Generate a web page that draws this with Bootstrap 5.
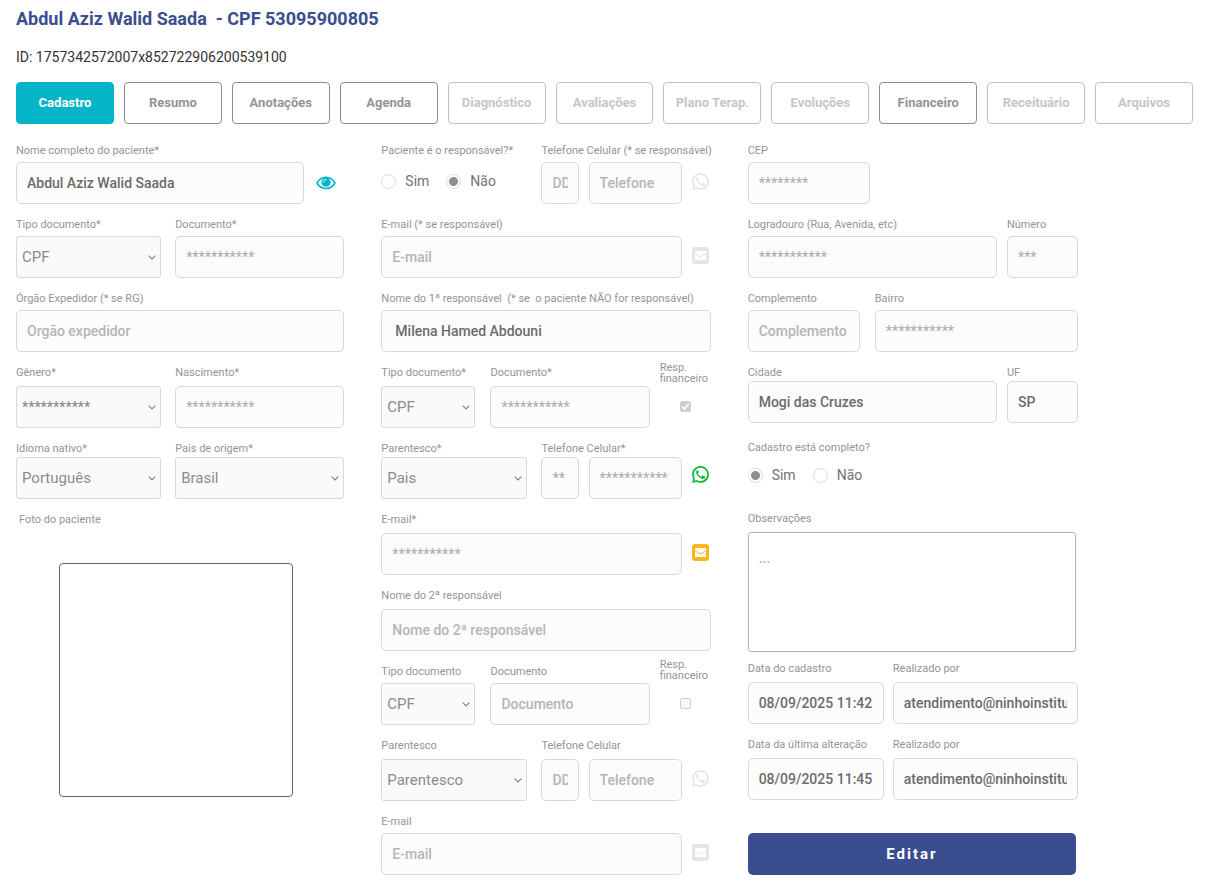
<!DOCTYPE html>
<html lang="pt-BR">
<head>
<meta charset="utf-8">
<meta name="viewport" content="width=device-width, initial-scale=1">
<title>Cadastro do paciente</title>
<link href="https://cdn.jsdelivr.net/npm/bootstrap@5.3.0/dist/css/bootstrap.min.css" rel="stylesheet">
<style>
  body { font-family: Roboto, "Liberation Sans", sans-serif; color: #333; background: #fff; }
  .page-wrap { padding: 8px 35px 10px 16px; }
  .patient-title { font-size: 18px; line-height: 22px; font-weight: 700; color: #3a4d8f; margin: 0 0 16px; }
  .patient-id { font-size: 14px; line-height: 22px; font-weight: 400; color: #333; margin: 0 0 14px; }

  .tab-strip { display: grid; grid-template-columns: repeat(11, minmax(0, 1fr)); gap: 10px; margin-bottom: 21px; }
  .tab-strip .btn { height: 42px; padding: 0 2px; font-size: 13px; font-weight: 700; border-radius: 4px; color: #949494; border: 1px solid #8c8c8c; background: #fff; white-space: nowrap; }
  .tab-strip .btn.active { background: #04b4c8; border-color: #04b4c8; color: #fff; }
  .tab-strip .btn:disabled { color: #c6c6c6; border-color: #c0c0c0; opacity: 1; }

  .form-cols { display: grid; grid-template-columns: 328fr 329fr 330fr; column-gap: 37px; align-items: start; margin-right: 115px; }
  .stack { display: flex; flex-direction: column; gap: 15px; min-width: 0; }
  .line { display: grid; align-items: end; }
  .name-line { grid-template-columns: minmax(0, 1fr) 20px; gap: 12px; padding-right: 8px; }
  .pair { grid-template-columns: minmax(0, 145fr) minmax(0, 169fr); gap: 14px; }
  .mail-line { grid-template-columns: minmax(0, 1fr) 19px; gap: 10px; }
  .contact-line { grid-template-columns: minmax(0, 146fr) minmax(0, 169fr); gap: 14px; }
  .phone-set { display: grid; grid-template-columns: minmax(0, 37fr) minmax(0, 93fr) 19px; gap: 10px; }
  .doc-line { grid-template-columns: minmax(0, 99fr) minmax(0, 159fr) 51px; gap: 10px; }
  .doc-line > :first-child { padding-right: 5px; }
  .zip { grid-template-columns: minmax(0, 122fr) minmax(0, 208fr); }
  .street { grid-template-columns: minmax(0, 249fr) minmax(0, 71fr); gap: 10px; }
  .district { grid-template-columns: minmax(0, 112fr) minmax(0, 203fr); gap: 15px; }
  .stamp { grid-template-columns: minmax(0, 136fr) minmax(0, 185fr); gap: 9px; }

  .cap { display: block; font-size: 11px; line-height: 12px; color: #949494; margin: 0 0 5px; white-space: nowrap; }
  .roomy .cap { margin-bottom: 7px; }
  .tight .cap { margin-bottom: 2px; }

  .form-control, .form-select { height: 42px; font-size: 14px; line-height: 22px; font-weight: 500; border: 1px solid #d9d9d9; border-radius: 5px; }
  .form-control { padding: 0 10px; }
  .form-control, .form-control:disabled { background-color: #fcfcfc; color: #6b6b6b; }
  .form-control::placeholder { color: #b5b5b5; opacity: 1; }
  .form-control.masked { color: #b0b0b8; }
  .form-select, .form-select:disabled { padding: 0 20px 0 5px; font-size: 15px; font-weight: 400; border-radius: 3px; color: #8c8c8c; background-color: #fafafa; background-size: 8px 5px; background-position: right 4px center;
    background-image: url("data:image/svg+xml,%3Csvg xmlns='http://www.w3.org/2000/svg' viewBox='0 0 8 5'%3E%3Cpath d='M.7.7 4 4 7.3.7' fill='none' stroke='%23858585' stroke-width='1.2'/%3E%3C/svg%3E"); }
  .form-select.masked:disabled { font-size: 14px; font-weight: 500; }
  .indent { padding-left: 13px; }
  textarea.form-control { display: block; height: 120px; padding: 14px 10px; resize: none; border-color: #b3b3b3; border-radius: 3px; background: #fff; }

  .choices { display: flex; align-items: center; height: 38px; gap: 17px; }
  .choices label { display: flex; align-items: center; gap: 9px; font-size: 14px; line-height: 18px; color: #737373; }
  .choices input { appearance: none; width: 15px; height: 15px; margin: 0; border: 1px solid #dcdcdc; border-radius: 50%; background: #fff; }
  .choices input:checked { background: radial-gradient(circle, #8e8e8e 4px, #fff 5px); }

  .resp { margin-top: -8px; }
  .resp .cap { line-height: 11px; margin-bottom: 2px; }
  .check-cell { height: 42px; padding-bottom: 2px; display: flex; align-items: center; justify-content: center; }
  .check-cell input { appearance: none; width: 11px; height: 11px; margin: 0; border: 1px solid #cfcfcf; border-radius: 2px; background: #f8f8f8; }
  .check-cell input:checked { border-color: #cfcfcf; background: #cfcfcf url("data:image/svg+xml,%3Csvg xmlns='http://www.w3.org/2000/svg' viewBox='0 0 9 9'%3E%3Cpath d='M1.2 4.8 3.4 7 7.8 1.8' fill='none' stroke='white' stroke-width='1.6'/%3E%3C/svg%3E") center / 9px 9px no-repeat; }

  .icon-btn { height: 42px; padding: 0 0 4px; border: 0; background: none; display: flex; align-items: center; justify-content: flex-start; color: #e5e5e5; }
  .icon-btn.eye { color: #04b4c8; padding: 0; }
  .icon-btn.wa-on { color: #00bb2d; padding-bottom: 8px; }
  .icon-btn.mail-on { color: #ffb61a; }

  .photo-cap { margin: 0 0 37px 3px; }
  .photo-box { display: block; width: 234px; max-width: 80%; aspect-ratio: 1; margin-left: 43px; border: 1px solid #666; border-radius: 4px; background: #fff; }
  .short { margin-right: 2px; }
  .notes { margin-bottom: -4px; }
  .btn-edit { height: 42px; margin-top: 18px; padding: 0; border: 0; border-radius: 5px; background: #3a4d8f; color: #fff; font-size: 15px; font-weight: 700; letter-spacing: 2px; }
  .btn-edit:hover { background: #31427c; color: #fff; }
</style>
</head>
<body>
<svg class="d-none" aria-hidden="true">
  <symbol id="i-wa" viewBox="0 0 16 16"><path fill="currentColor" d="M13.601 2.326A7.854 7.854 0 0 0 7.994 0C3.627 0 .068 3.558.064 7.926c0 1.399.366 2.76 1.057 3.965L0 16l4.204-1.102a7.933 7.933 0 0 0 3.79.965h.004c4.368 0 7.926-3.558 7.93-7.93A7.898 7.898 0 0 0 13.6 2.326zM7.994 14.221a6.3 6.3 0 0 1-3.2-.9l-.24-.144-2.494.654.666-2.433-.156-.251a6.3 6.3 0 0 1-.9-3.3c0-3.5 2.8-6.3 6.3-6.3a6.3 6.3 0 0 1 6.300 6.300c0 3.500-2.800 6.370-6.276 6.374z"/><path fill="currentColor" d="M5.200 3.900c-.5 0-1.300.7-1.300 1.800 0 1.500 1 2.900 2.300 4.200 1.400 1.400 2.900 2.200 4.300 2.200 1.100 0 1.900-.9 1.900-1.800 0-.3-.1-.4-.3-.5l-1.900-.9c-.3-.1-.4 0-.6.2l-.6.8c-.2.2-.3.2-.6.1C7.200 9.500 6 8.300 5.600 7.300c-.1-.2 0-.4.1-.5l.5-.6c.1-.2.2-.3.1-.5l-.7-1.600c-.1-.2-.2-.2-.4-.2z"/></symbol>
  <symbol id="i-mail" viewBox="0 0 17 17"><rect width="17" height="17" rx="3" fill="currentColor"/><path fill="#fff" d="M3 4h11v2.200L8.500 9.500 3 6.200zM3 7.200l5.500 3.300L14 7.200V13H3z"/></symbol>
  <symbol id="i-eye" viewBox="0 0 20 14"><path fill="none" stroke="currentColor" stroke-width="1.600" d="M1 7C3 3.500 6.200 1.300 10 1.300S17 3.500 19 7c-2 3.500-5.200 5.500-9 5.500S3 10.500 1 7z"/><circle cx="10" cy="6.200" r="4.600" fill="currentColor"/><path fill="none" stroke="#fff" stroke-width="1" stroke-linecap="round" d="M7.500 6c0-1.400.9-2.400 2.300-2.500"/></symbol>
</svg>

<main class="page-wrap">
  <h1 class="patient-title">Abdul Aziz Walid Saada &nbsp;- CPF 53095900805</h1>
  <p class="patient-id">ID: 1757342572007x852722906200539100</p>

  <nav class="tab-strip" aria-label="Seções">
    <button type="button" class="btn active">Cadastro</button>
    <button type="button" class="btn">Resumo</button>
    <button type="button" class="btn">Anotações</button>
    <button type="button" class="btn">Agenda</button>
    <button type="button" class="btn" disabled>Diagnóstico</button>
    <button type="button" class="btn" disabled>Avaliações</button>
    <button type="button" class="btn" disabled>Plano Terap.</button>
    <button type="button" class="btn" disabled>Evoluções</button>
    <button type="button" class="btn">Financeiro</button>
    <button type="button" class="btn" disabled>Receituário</button>
    <button type="button" class="btn" disabled>Arquivos</button>
  </nav>

  <form class="form-cols">
    <!-- Paciente -->
    <section class="stack">
      <div class="line name-line">
        <div><label class="cap" for="nome">Nome completo do paciente*</label><input id="nome" class="form-control" value="Abdul Aziz Walid Saada" disabled></div>
        <button type="button" class="icon-btn eye" aria-label="Ver dados"><svg width="20" height="14"><use href="#i-eye"/></svg></button>
      </div>
      <div class="line pair">
        <div><label class="cap" for="tdoc">Tipo documento*</label><select id="tdoc" class="form-select" disabled><option>CPF</option></select></div>
        <div><label class="cap" for="doc">Documento*</label><input id="doc" class="form-control masked" value="***********" disabled></div>
      </div>
      <div><label class="cap" for="orgao">Órgão Expedidor (* se RG)</label><input id="orgao" class="form-control" placeholder="Orgão expedidor" disabled></div>
      <div class="line pair roomy">
        <div><label class="cap" for="genero">Gênero*</label><select id="genero" class="form-select masked" disabled><option>***********</option></select></div>
        <div><label class="cap" for="nasc">Nascimento*</label><input id="nasc" class="form-control masked" value="***********" disabled></div>
      </div>
      <div class="line pair tight">
        <div><label class="cap" for="idioma">Idioma nativo*</label><select id="idioma" class="form-select" disabled><option>Português</option></select></div>
        <div><label class="cap" for="pais">País de origem*</label><select id="pais" class="form-select" disabled><option>Brasil</option></select></div>
      </div>
      <div>
        <label class="cap photo-cap" for="foto">Foto do paciente</label>
        <button type="button" id="foto" class="photo-box"></button>
      </div>
    </section>

    <!-- Responsáveis -->
    <section class="stack">
      <div class="line contact-line align-items-start">
        <div>
          <span class="cap" id="eresp">Paciente é o responsável?*</span>
          <div class="choices" role="radiogroup" aria-labelledby="eresp">
            <label><input type="radio" name="resp">Sim</label>
            <label><input type="radio" name="resp" checked>Não</label>
          </div>
        </div>
        <div>
          <label class="cap" for="tel0">Telefone Celular (* se responsável)</label>
          <div class="phone-set"><input class="form-control" aria-label="DDD" placeholder="DDD" disabled><input id="tel0" class="form-control" placeholder="Telefone" disabled><button type="button" class="icon-btn" aria-label="WhatsApp" disabled><svg width="17" height="17"><use href="#i-wa"/></svg></button></div>
        </div>
      </div>
      <div class="line mail-line">
        <div><label class="cap" for="mail0">E-mail (* se responsável)</label><input id="mail0" class="form-control" placeholder="E-mail" disabled></div>
        <button type="button" class="icon-btn" aria-label="Enviar e-mail" disabled><svg width="17" height="17"><use href="#i-mail"/></svg></button>
      </div>
      <div><label class="cap" for="nome1">Nome do 1ª responsável &nbsp;(* se &nbsp;o paciente NÃO for responsável)</label><input id="nome1" class="form-control indent" value="Milena Hamed Abdouni" disabled></div>
      <div class="line doc-line roomy">
        <div><label class="cap" for="tdoc1">Tipo documento*</label><select id="tdoc1" class="form-select" disabled><option>CPF</option></select></div>
        <div><label class="cap" for="doc1">Documento*</label><input id="doc1" class="form-control masked" value="***********" disabled></div>
        <div class="resp"><label class="cap" for="fin1">Resp.<br>financeiro</label><div class="check-cell"><input type="checkbox" id="fin1" checked disabled></div></div>
      </div>
      <div class="line contact-line tight">
        <div><label class="cap" for="par1">Parentesco*</label><select id="par1" class="form-select" disabled><option>Pais</option></select></div>
        <div>
          <label class="cap" for="tel1">Telefone Celular*</label>
          <div class="phone-set"><input class="form-control masked" aria-label="DDD" value="**" disabled><input id="tel1" class="form-control masked" value="***********" disabled><button type="button" class="icon-btn wa-on" aria-label="WhatsApp"><svg width="17" height="17"><use href="#i-wa"/></svg></button></div>
        </div>
      </div>
      <div class="line mail-line roomy">
        <div><label class="cap" for="mail1">E-mail*</label><input id="mail1" class="form-control masked" value="***********" disabled></div>
        <button type="button" class="icon-btn mail-on" aria-label="Enviar e-mail"><svg width="17" height="17"><use href="#i-mail"/></svg></button>
      </div>
      <div class="roomy"><label class="cap" for="nome2">Nome do 2ª responsável</label><input id="nome2" class="form-control" placeholder="Nome do 2ª responsável" disabled></div>
      <div class="line doc-line">
        <div><label class="cap" for="tdoc2">Tipo documento</label><select id="tdoc2" class="form-select" disabled><option>CPF</option></select></div>
        <div><label class="cap" for="doc2">Documento</label><input id="doc2" class="form-control" placeholder="Documento" disabled></div>
        <div class="resp"><label class="cap" for="fin2">Resp.<br>financeiro</label><div class="check-cell"><input type="checkbox" id="fin2" disabled></div></div>
      </div>
      <div class="line contact-line roomy">
        <div><label class="cap" for="par2">Parentesco</label><select id="par2" class="form-select" disabled><option>Parentesco</option></select></div>
        <div>
          <label class="cap" for="tel2">Telefone Celular</label>
          <div class="phone-set"><input class="form-control" aria-label="DDD" placeholder="DDD" disabled><input id="tel2" class="form-control" placeholder="Telefone" disabled><button type="button" class="icon-btn" aria-label="WhatsApp" disabled><svg width="17" height="17"><use href="#i-wa"/></svg></button></div>
        </div>
      </div>
      <div class="line mail-line">
        <div><label class="cap" for="mail2">E-mail</label><input id="mail2" class="form-control" placeholder="E-mail" disabled></div>
        <button type="button" class="icon-btn" aria-label="Enviar e-mail" disabled><svg width="17" height="17"><use href="#i-mail"/></svg></button>
      </div>
    </section>

    <!-- Endereço e registro -->
    <section class="stack">
      <div class="line zip">
        <div><label class="cap" for="cep">CEP</label><input id="cep" class="form-control masked" value="********" disabled></div>
      </div>
      <div class="line street">
        <div><label class="cap" for="rua">Logradouro (Rua, Avenida, etc)</label><input id="rua" class="form-control masked" value="***********" disabled></div>
        <div><label class="cap" for="num">Número</label><input id="num" class="form-control masked" value="***" disabled></div>
      </div>
      <div class="line district">
        <div><label class="cap" for="comp">Complemento</label><input id="comp" class="form-control" placeholder="Complemento" disabled></div>
        <div><label class="cap" for="bairro">Bairro</label><input id="bairro" class="form-control masked" value="***********" disabled></div>
      </div>
      <div class="line street tight">
        <div><label class="cap" for="cidade">Cidade</label><input id="cidade" class="form-control" value="Mogi das Cruzes" disabled></div>
        <div><label class="cap" for="uf">UF</label><input id="uf" class="form-control" value="SP" disabled></div>
      </div>
      <div class="tight pt-1">
        <span class="cap" id="compl">Cadastro está completo?</span>
        <div class="choices" role="radiogroup" aria-labelledby="compl">
          <label><input type="radio" name="completo" checked>Sim</label>
          <label><input type="radio" name="completo">Não</label>
        </div>
      </div>
      <div class="short notes roomy pt-1"><label class="cap" for="obs">Observações</label><textarea id="obs" class="form-control" placeholder="..."></textarea></div>
      <div class="line stamp roomy">
        <div><label class="cap" for="dcad">Data do cadastro</label><input id="dcad" class="form-control" value="08/09/2025 11:42" disabled></div>
        <div><label class="cap" for="pcad">Realizado por</label><input id="pcad" class="form-control" value="atendimento@ninhoinstituto.com.br" disabled></div>
      </div>
      <div class="line stamp roomy">
        <div><label class="cap" for="dalt">Data da última alteração</label><input id="dalt" class="form-control" value="08/09/2025 11:45" disabled></div>
        <div><label class="cap" for="palt">Realizado por</label><input id="palt" class="form-control" value="atendimento@ninhoinstituto.com.br" disabled></div>
      </div>
      <button type="button" class="btn btn-edit short">Editar</button>
    </section>
  </form>
</main>
<script src="https://cdn.jsdelivr.net/npm/bootstrap@5.3.0/dist/js/bootstrap.bundle.min.js"></script>
</body>
</html>
